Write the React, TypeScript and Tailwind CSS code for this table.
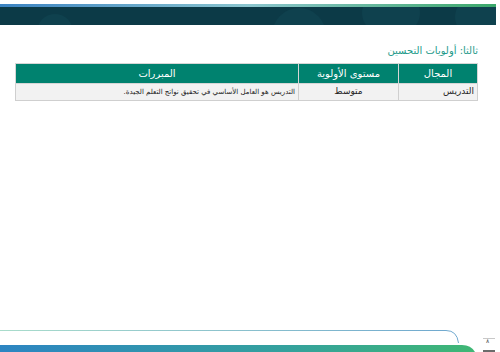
import React from "react";

const rows = [
  {
    field: "التدريس",
    level: "متوسط",
    reason: "التدريس هو العامل الأساسي في تحقيق نواتج التعلم الجيدة.",
  },
];

const Header = () => (
  <div className="pt-[4px]">
    <div className="w-[496px] h-[3px] bg-gradient-to-r from-[#3b83c2] via-[#8cc6cf] to-[#3aa86a]" />
    <div className="relative w-[496px] h-[18px] bg-[#0c3a47] overflow-hidden">
      <div className="absolute left-[37px] top-[7px] w-[36px] h-[36px] rounded-full bg-[#0f414e]" />
      <div className="absolute left-[272px] top-[1px] w-[54px] h-[54px] rounded-full bg-[#0f414e]" />
      <div className="absolute left-[362px] top-[-14px] w-[58px] h-[40px] rounded-full bg-[#0f414e]" />
      <div className="absolute left-[455px] top-[-10px] w-[50px] h-[40px] rounded-full bg-[#0f414e]" />
    </div>
  </div>
);

const Footer = () => (
  <div className="mt-auto relative h-[23px]">
    <svg width="500" height="23" viewBox="0 0 500 23" className="block">
      <defs>
        <linearGradient id="ln" x1="0" x2="1" y1="0" y2="0">
          <stop offset="0" stopColor="#a9dccb" />
          <stop offset="1" stopColor="#6fa8cf" />
        </linearGradient>
        <linearGradient id="bar" x1="0" x2="1" y1="0" y2="0">
          <stop offset="0" stopColor="#2d85c2" />
          <stop offset="0.6" stopColor="#34a19d" />
          <stop offset="1" stopColor="#3fb774" />
        </linearGradient>
      </defs>
      <path
        d="M0 1.5 H446 Q457 1.5 458.5 14"
        fill="none"
        stroke="url(#ln)"
        strokeWidth="1"
      />
      <path d="M0 16 H462 Q471 16 475 23 H0 Z" fill="url(#bar)" />
      <line x1="483" x2="495" y1="9.5" y2="9.5" stroke="#c8c8c8" strokeWidth="1" />
      <rect x="483" y="21" width="12" height="2" fill="#6b6b6b" />
    </svg>
    <span className="absolute left-[486px] top-[9px] text-[6px] leading-none text-[#555]">
      ٨
    </span>
  </div>
);

export default function App() {
  return (
    <div
      className="w-[500px] h-[352px] bg-white flex flex-col overflow-hidden"
      style={{ fontFamily: '"DejaVu Sans", "Noto Sans", sans-serif' }}
    >
      <Header />
      <div dir="rtl" className="pr-[22px] pl-[15px] pt-[19px]">
        <h2 className="text-[10px] leading-[14px] text-[#1e9a8a] font-normal mb-[5px]">
          ثالثا: أولويات التحسين
        </h2>
        <table className="w-full border-collapse text-center">
          <thead>
            <tr className="bg-[#00826f] text-white text-[10px]">
              <th className="w-[79px] h-[20px] font-normal border border-[#d6d6d6]">المجال</th>
              <th className="w-[100px] font-normal border border-[#d6d6d6]">مستوى الأولوية</th>
              <th className="font-normal border border-[#d6d6d6]">المبررات</th>
            </tr>
          </thead>
          <tbody>
            {rows.map((r) => (
              <tr key={r.field} className="bg-[#f2f2f2] text-[#222]">
                <td className="h-[17px] text-right pr-[3px] text-[9px] border border-[#cfcfcf]">
                  {r.field}
                </td>
                <td className="text-[9px] border border-[#cfcfcf]">{r.level}</td>
                <td className="text-right pr-[3px] text-[7px] border border-[#cfcfcf]">
                  {r.reason}
                </td>
              </tr>
            ))}
          </tbody>
        </table>
      </div>
      <Footer />
    </div>
  );
}
